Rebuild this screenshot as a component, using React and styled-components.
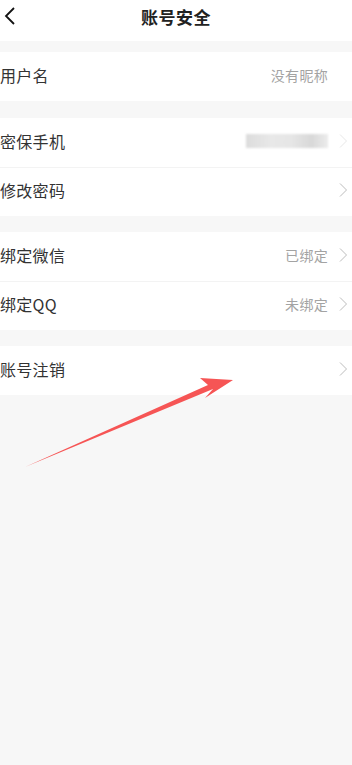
import React from "react"
import styled, { createGlobalStyle } from "styled-components"

const Global = createGlobalStyle`
    html, body {
        margin: 0;
        padding: 0;
        background: #f7f7f7;
        font-family: "Noto Sans CJK SC", "Noto Sans", sans-serif;
    }
`

const Page = styled.div`
    position: relative;
    width: 352px;
    min-height: 765px;
    background: #f7f7f7;
    overflow: hidden;
`

const Header = styled.header`
    height: 41px;
    background: #fff;
    display: flex;
    align-items: center;
    justify-content: center;
    position: relative;
`

const Title = styled.h1`
    margin: 0;
    font-size: 17px;
    font-weight: 700;
    color: #222;
    letter-spacing: 0.5px;
    line-height: 1;
    margin-top: -8px;
`

const Back = styled.button`
    position: absolute;
    left: 2px;
    top: 6px;
    border: 0;
    background: none;
    padding: 0;
    width: 16px;
    height: 20px;
    display: flex;
`

const Group = styled.section`
    background: #fff;
    margin-top: ${props => props.gap}px;
`

const Row = styled.div`
    height: 49px;
    box-sizing: border-box;
    display: flex;
    align-items: center;
    padding-right: 4px;
    padding-bottom: 4px;
    border-top: ${props => props.divided ? "1px solid #f3f3f3" : "none"};
`

const Label = styled.span`
    flex: 1;
    font-size: 16px;
    line-height: 20px;
    color: #333;
    letter-spacing: 0.3px;
`

const Value = styled.span`
    font-size: 14px;
    line-height: 20px;
    color: #a3a3a3;
    letter-spacing: 0.3px;
`

const Blurred = styled.span`
    display: block;
    width: 82px;
    height: 14px;
    background: linear-gradient(90deg, #dcdcdc 0%, #e8e8e8 30%, #e6e6e6 55%, #d8d8d8 80%, #ececec 100%);
    filter: blur(1px);
`

const Chevron = styled.svg`
    width: 10px;
    height: 16px;
    margin-left: 10px;
    visibility: ${props => props.hidden ? "hidden" : "visible"};
    opacity: ${props => props.faint ? 0.35 : 1};
`

const Arrow = styled.svg`
    position: absolute;
    left: 0;
    top: 0;
    pointer-events: none;
`

const Chev = ({ hidden, faint }) =>
    <Chevron hidden={hidden} faint={faint} viewBox="0 0 10 16">
        <path d="M2 1.5 L8.5 8 L2 14.5" fill="none" stroke="#bdbdbd" strokeWidth="1" />
    </Chevron>

const groups = [
    { gap: 11, rows: [{ label: "用户名", value: "没有昵称", noArrow: true }] },
    { gap: 17, rows: [{ label: "密保手机", blurred: true }, { label: "修改密码" }] },
    { gap: 16, rows: [{ label: "绑定微信", value: "已绑定" }, { label: "绑定QQ", value: "未绑定" }] },
    { gap: 16, rows: [{ label: "账号注销" }] },
]

export default function App() {
    return (
        <Page>
            <Global />
            <Header>
                <Back aria-label="返回">
                    <svg width="16" height="20" viewBox="0 0 16 20">
                        <path d="M12 2 L4 10 L12 18" fill="none" stroke="#111" strokeWidth="1.8" />
                    </svg>
                </Back>
                <Title>账号安全</Title>
            </Header>
            {groups.map((g, i) =>
                <Group key={i} gap={g.gap}>
                    {g.rows.map((r, j) =>
                        <Row key={r.label} divided={j > 0}>
                            <Label>{r.label}</Label>
                            {r.value && <Value>{r.value}</Value>}
                            {r.blurred && <Blurred />}
                            <Chev hidden={r.noArrow} faint={r.blurred} />
                        </Row>
                    )}
                </Group>
            )}
            <Arrow width="352" height="765" viewBox="0 0 352 765">
                <polygon points="25,467 213,389 205,398 233,380 200,378 208,385" fill="#f65555" />
            </Arrow>
        </Page>
    )
}
